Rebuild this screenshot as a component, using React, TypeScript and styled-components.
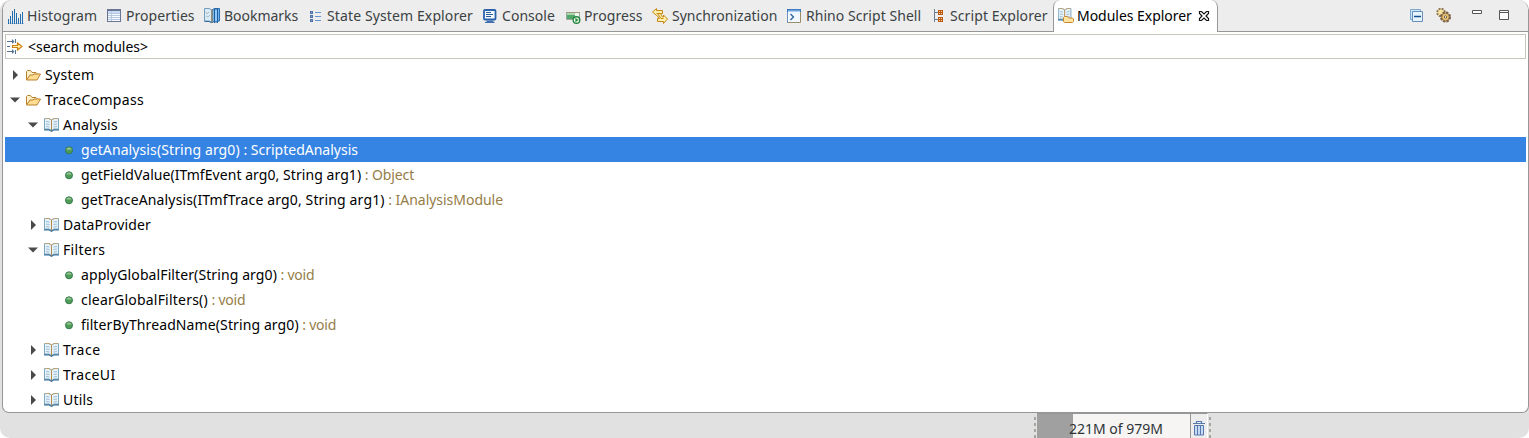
import React from "react";
import styled, { createGlobalStyle } from "styled-components";

const GlobalStyle = createGlobalStyle`
  * { box-sizing: border-box; }
  body { margin: 0; background: #fff; overflow: hidden; }
`;

const Window = styled.div`
  display: flex;
  flex-direction: column;
  width: 1529px;
  height: 438px;
  background: #e1e1e1;
  border-radius: 10px;
  overflow: hidden;
  font-family: "Noto Sans", sans-serif;
  font-size: 14px;
  color: #000;
`;

const Panel = styled.div`
  height: 413px;
  flex: none;
  margin-left: 2px;
  display: flex;
  flex-direction: column;
  background: #fff;
  border: 1px solid #979797;
  border-top: 0;
  border-radius: 10px 10px 7px 7px;
  overflow: hidden;
`;

const TabBar = styled.div`
  height: 32px;
  flex: none;
  display: flex;
  background: linear-gradient(#979797, #979797) 0 31px / 100% 1px no-repeat #ededed;
  padding-left: 5px;
`;

const Tab = styled.div<{ $width: number }>`
  display: flex;
  align-items: center;
  width: ${(p) => p.$width}px;
  flex: none;
  color: #3b4244;
`;

const ActiveTab = styled(Tab)`
  margin-left: -5px;
  padding-left: 4px;
  background: #fff;
  color: #000;
  border: 1px solid #979797;
  border-width: 0 1px;
  border-radius: 7px 7px 0 0;
`;

const TabLabel = styled.span<{ $indent: number; $spacing: number }>`
  margin-left: ${(p) => p.$indent}px;
  letter-spacing: ${(p) => p.$spacing}px;
  line-height: 20px;
  white-space: nowrap;
`;

const Icon = styled.svg`
  width: 16px;
  height: 16px;
  flex: none;
  display: block;
`;

const CloseIcon = styled(Icon)`
  width: 12px;
  height: 12px;
  margin-left: auto;
  margin-right: 7px;
`;

const Toolbar = styled.div`
  display: flex;
  align-items: center;
  margin-left: auto;
  padding-right: 13px;
`;

const ToolButton = styled.div<{ $gap: number }>`
  margin-right: ${(p) => p.$gap}px;
`;

const Search = styled.div`
  display: flex;
  align-items: center;
  height: 25px;
  flex: none;
  margin: 2px 2px 3px;
  padding-left: 1px;
  border: 1px solid #c9c5bd;
  & > svg { margin-bottom: 1px; }
`;

const Tree = styled.div`
  display: flex;
  flex-direction: column;
  margin: 0 2px;
`;

const Row = styled.div<{ $depth: number; $selected?: boolean }>`
  display: flex;
  align-items: center;
  height: 25px;
  padding-left: ${(p) => 2 + p.$depth * 18}px;
  background: ${(p) => (p.$selected ? "#3584e4" : "transparent")};
  color: ${(p) => (p.$selected ? "#fff" : "#000")};
  & > svg { margin-top: 1px; }
`;

const Arrow = styled(Icon)`
  margin-right: 2px;
`;

const RowLabel = styled.span<{ $spacing: number }>`
  margin-left: 4px;
  letter-spacing: ${(p) => p.$spacing}px;
  line-height: 20px;
  white-space: pre;
`;

const ReturnType = styled.span<{ $selected?: boolean; $spacing: number }>`
  letter-spacing: ${(p) => p.$spacing}px;
  color: ${(p) => (p.$selected ? "#fff" : "#957d47")};
`;

const StatusBar = styled.div`
  flex: 1;
  display: flex;
  padding-left: 1033px;
`;

const Handle = styled.div`
  width: 3px;
  margin-top: 3px;
  background: repeating-linear-gradient(#a5a69f 0 3px, transparent 3px 6px) 1px 1px / 2px 100% no-repeat;
`;

const Heap = styled.div`
  display: flex;
  align-items: center;
  justify-content: center;
  width: 154px;
  height: 30px;
  margin-left: 1px;
  border-top: 1px solid #979797;
  border-right: 1px solid #979797;
  background: linear-gradient(90deg, #a0a0a0 36px, #f6f5f4 36px);
  color: #2e3436;
  padding-left: 5px;
`;

const Trash = styled.div`
  display: flex;
  justify-content: center;
  width: 17px;
  padding-top: 6px;
  border-top: 1px solid #979797;
  border-right: 1px solid #fff;
  background: #ededed;
`;

const HistogramIcon = () => (
  <Icon viewBox="0 0 16 16" shapeRendering="crispEdges">
    <path d="M.5 11v5M2.500 8v8M4.500 3v13M6.500 1v15M8.500 5v11M10.500 10v6M12.500 6v10M14.500 4v12" stroke="#236fae" />
    <path d="M0 15.500h16" stroke="#236fae" opacity=".3" />
  </Icon>
);

const PropertiesIcon = () => (
  <Icon viewBox="0 0 16 16" shapeRendering="crispEdges">
    <path d="M1.500 1.500h13v12h-13z" fill="#f7fbff" stroke="#697592" />
    <path d="M1 1h14v2H1z" fill="#697592" />
    <path d="M2 3h12v2H2z" fill="#c9dcf4" />
    <path d="M2 5.500h12M2 7.500h12M2 9.500h12M2 11.500h12M5.500 3v10" stroke="#b6c7df" />
  </Icon>
);

const BookmarksIcon = () => (
  <Icon viewBox="0 0 16 16">
    <path d="M.5.500H5l3 1.700v12l-3-1.200H.5z" fill="#dceaf4" stroke="#6f9dbc" />
    <path d="m2 4 1 2 2-2M2 8l2 1 2-2" fill="none" stroke="#a5bfd0" />
    <path d="M.5 13.500H5l3 1.300" fill="none" stroke="#356e98" />
    <path d="M8 2 10.500.5h5v12.500H11L8 14.500z" fill="#72b5f1" stroke="#286cab" />
    <path d="M10.500 1h3v14L12 13.300 10.500 15z" fill="#8fcaff" stroke="#1f5d9c" />
    <path d="M8 2v12.500" stroke="#b6853d" />
  </Icon>
);

const StateIcon = () => (
  <Icon viewBox="0 0 16 16" shapeRendering="crispEdges">
    <path d="M1.500 3.500h2v2h-2zM1.500 7.500h2v2h-2zM1.500 11.500h2v2h-2z" fill="#80a4db" stroke="#4e6fa9" />
    <path d="M6 4.500h6M6 8.500h6M6 12.500h6" stroke="#6993ce" />
  </Icon>
);

const ConsoleIcon = () => (
  <Icon viewBox="0 0 16 16">
    <rect x="1" y="2" width="11.500" height="9.500" rx="1" fill="#f4faff" stroke="#2c61ac" strokeWidth="1.800" />
    <path d="M3 4.500h5M3 6.500h7M3 8.500h5" stroke="#2c5d9d" />
    <path d="M3.500 12.500h7V14h1v1H2v-1h1.500z" fill="#4270af" />
  </Icon>
);

const ProgressIcon = () => (
  <Icon viewBox="0 0 16 16">
    <path d="M.5 4.500h13v7H.5z" fill="#edf7e9" stroke="#9da8a0" />
    <path d="M1 5h8v6H1z" fill="#50a768" />
    <path d="M1 5h8v2H1z" fill="#a9d6af" />
    <path d="M0 4.500h14" stroke="#a09b80" />
    <circle cx="10.500" cy="12" r="3.300" fill="#fff" stroke="#278540" strokeWidth="1.400" />
    <path d="m9.300 9.800 3.500 2.200-3.500 2.200z" fill="#299342" />
  </Icon>
);

const SyncIcon = () => (
  <Icon viewBox="0 0 16 16">
    <path d="M4.500.5v2h6v3h-2l2 3.500h1V7l4 4-4 4.500v-2h-6v-3h2L5 7.500H4.500l-4-3.500z" fill="#fff1a9" stroke="#c68618" />
    <path d="M4.500 5.500h4M5.500 5.500 9 10.500h2.500" fill="none" stroke="#c68618" />
  </Icon>
);

const ShellIcon = () => (
  <Icon viewBox="0 0 16 16">
    <path d="M.5 1.500h13v13H.5z" fill="#f1f8ff" stroke="#9a8d69" />
    <path d="M0 1h14v3H0z" fill="#3e7ac1" />
    <path d="M1 2.500h12V4H1z" fill="#a7cdf1" />
    <path d="M.5 4v10.500" stroke="#6c91bc" />
    <path d="m3.500 6 3 3-3 3" fill="none" stroke="#285d93" strokeWidth="1.200" />
  </Icon>
);

const ScriptIcon = () => (
  <Icon viewBox="0 0 16 16" shapeRendering="crispEdges">
    <path d="M.5 1v13M0 4.500h4M0 11.500h4" stroke="#6c7f9b" />
    <path d="M4 2h5v5H4zM4 9h5v5H4z" fill="#b95914" />
    <path d="M5 3h1v1H5zM7 3h1v1H7zM5 5h1v1H5zM7 5h1v1H7zM5 10h1v1H5zM7 10h1v1H7zM5 12h1v1H5zM7 12h1v1H7z" fill="#ffd49a" />
  </Icon>
);

const bookPages = (
  <>
    <path d="M1.500 1.500H6L8.500 3 11 1.500h4.500V12H11l-2.500 1.500L6 12H1.500z" fill="#e6f2fa" stroke="#7fa6bf" />
    <path d="M1 12.800h5l2.500 1.500 2.500-1.500h5" fill="none" stroke="#356e98" strokeWidth="1.300" />
    <path d="M2 1.500h4L8.500 3 11 1.500h4" fill="none" stroke="#bea376" />
    <path d="M8.500 3v10.500" stroke="#b58b4d" />
    <path d="m3 4.500 3.500.5M3 7l3.500.5M3 9.500l3.500.5M10.500 5l3.500-.5M10.500 7.500l3.500-.5M10.500 10l3.500-.5" stroke="#9ebdd4" />
  </>
);

const BookIcon = () => <Icon viewBox="0 0 16 16">{bookPages}</Icon>;

const ModulesIcon = () => (
  <Icon viewBox="0 0 16 16">
    <g transform="translate(-1 -1) scale(.9 1)">{bookPages}</g>
    <path d="M5.500 13.500V9.500l1-1h3l1 1.500h4l1 1v2.500l-1 1h-8z" fill="#ffe3a2" stroke="#c48a30" />
  </Icon>
);

const FolderIcon = () => (
  <Icon viewBox="0 0 16 16">
    <path d="M1.500 12.500v-8l1-1h3l1.500 2h4l1 1v2" fill="#fff0cc" stroke="#b9812f" />
    <path d="m1.500 13 3.500-5h3l1-1h6.500L12 13z" fill="#ffdc91" stroke="#b9812f" strokeLinejoin="round" />
  </Icon>
);

const MethodIcon = () => (
  <Icon viewBox="0 0 16 16">
    <circle cx="8" cy="8.300" r="3.500" fill="#4f9c58" stroke="#347a4c" />
    <path d="M5.200 7.500a2.900 2.600 0 0 1 5.600 0z" fill="#9ac693" />
  </Icon>
);

const FilterIcon = () => (
  <Icon viewBox="0 0 16 16">
    <path d="M0 3.500h7M0 13.500h7M0 8.500h3" stroke="#557492" />
    <path d="m5 1 2.500 2.500L5 6M5 11l2.500 2.500L5 16" fill="#557492" />
    <path d="M8.500 1v4M8.500 12v4" stroke="#557492" />
    <path d="M5.500 7.500h5V5l4.500 3.500-4.500 3.500V9.500h-5z" fill="#fff0ac" stroke="#cd8214" strokeWidth="1.200" />
  </Icon>
);

const tabs = [
  { label: "Histogram", icon: <HistogramIcon />, width: 98, indent: 3, spacing: 0.1 },
  { label: "Properties", icon: <PropertiesIcon />, width: 98, indent: 4, spacing: 0.06 },
  { label: "Bookmarks", icon: <BookmarksIcon />, width: 105, indent: 4, spacing: -0.03 },
  { label: "State System Explorer", icon: <StateIcon />, width: 174, indent: 2, spacing: 0.12 },
  { label: "Console", icon: <ConsoleIcon />, width: 83, indent: 3, spacing: 0.03 },
  { label: "Progress", icon: <ProgressIcon />, width: 86, indent: 2, spacing: 0.1 },
  { label: "Synchronization", icon: <SyncIcon />, width: 135, indent: 4, spacing: 0 },
  { label: "Rhino Script Shell", icon: <ShellIcon />, width: 147, indent: 3, spacing: 0.05 },
  { label: "Script Explorer", icon: <ScriptIcon />, width: 124, indent: 0, spacing: 0.1 },
];

type Node = { depth: number; label: string; kind: "folder" | "book" | "method"; open?: boolean; type?: string; selected?: boolean; spacing: number; typeSpacing?: number };

const nodes: Node[] = [
  { depth: 0, label: "System", kind: "folder", spacing: 0.3 },
  { depth: 0, label: "TraceCompass", kind: "folder", open: true, spacing: 0.3 },
  { depth: 1, label: "Analysis", kind: "book", open: true, spacing: 0.2 },
  { depth: 2, label: "getAnalysis(String arg0)", type: "ScriptedAnalysis", kind: "method", selected: true, spacing: 0.1 },
  { depth: 2, label: "getFieldValue(ITmfEvent arg0, String arg1)", type: "Object", kind: "method", spacing: 0.06, typeSpacing: -0.1 },
  { depth: 2, label: "getTraceAnalysis(ITmfTrace arg0, String arg1)", type: "IAnalysisModule", kind: "method", spacing: 0.14, typeSpacing: -0.03 },
  { depth: 1, label: "DataProvider", kind: "book", spacing: 0.15 },
  { depth: 1, label: "Filters", kind: "book", open: true, spacing: 0.35 },
  { depth: 2, label: "applyGlobalFilter(String arg0)", type: "void", kind: "method", spacing: 0.1, typeSpacing: -0.2 },
  { depth: 2, label: "clearGlobalFilters()", type: "void", kind: "method", spacing: 0.22, typeSpacing: -0.2 },
  { depth: 2, label: "filterByThreadName(String arg0)", type: "void", kind: "method", spacing: 0.11, typeSpacing: -0.2 },
  { depth: 1, label: "Trace", kind: "book", spacing: 0.5 },
  { depth: 1, label: "TraceUI", kind: "book", spacing: 0.35 },
  { depth: 1, label: "Utils", kind: "book", spacing: 0.2 },
];

const icons = { folder: <FolderIcon />, book: <BookIcon />, method: <MethodIcon /> };

const TreeRow = ({ node }: { node: Node }) => (
  <Row $depth={node.depth} $selected={node.selected}>
    <Arrow viewBox="0 0 16 16">
      {node.kind !== "method" && <path d={node.open ? "M3 5.500h10L8 10.500z" : "M6 3v10l5-5z"} fill="#4a4a4a" />}
    </Arrow>
    {icons[node.kind]}
    <RowLabel $spacing={node.spacing}>
      {node.label}
      {node.type && <ReturnType $selected={node.selected} $spacing={node.typeSpacing ?? 0}> : {node.type}</ReturnType>}
    </RowLabel>
  </Row>
);

export default function App() {
  return (
    <Window>
      <GlobalStyle />
      <Panel>
        <TabBar>
          {tabs.map((t) => (
            <Tab key={t.label} $width={t.width}>
              {t.icon}
              <TabLabel $indent={t.indent} $spacing={t.spacing}>{t.label}</TabLabel>
            </Tab>
          ))}
          <ActiveTab $width={165}>
            <ModulesIcon />
            <TabLabel $indent={3} $spacing={-0.03}>Modules Explorer</TabLabel>
            <CloseIcon viewBox="0 0 12 12">
              <path d="M1.500 1.500h2L6 4l2.500-2.500h2v2L8 6l2.500 2.500v2h-2L6 8l-2.500 2.500h-2v-2L4 6 1.500 3.500z" fill="#fff" stroke="#111" strokeWidth="1.200" />
            </CloseIcon>
          </ActiveTab>
          <Toolbar>
            <ToolButton $gap={10}>
              <Icon viewBox="0 0 16 16">
                <path d="M.5 1.500h10v10H.5z" fill="#cce7fa" stroke="#7da8d1" />
                <path d="M2.500 3.500h10v10h-10z" fill="#e4f5ff" stroke="#698cb9" />
                <path d="M4 8.500h7" stroke="#174e8c" strokeWidth="1.500" />
              </Icon>
            </ToolButton>
            <ToolButton $gap={20}>
              <Icon viewBox="0 0 16 16">
                <circle cx="5" cy="4.500" r="3.800" fill="#f5e3a0" stroke="#8f7353" strokeWidth="1.800" strokeDasharray="2 1" />
                <circle cx="9.500" cy="9" r="4.500" fill="#e9c874" stroke="#765a42" strokeWidth="2" strokeDasharray="2.400 1.130" />
                <circle cx="9.500" cy="9" r="3.700" fill="#e9c874" stroke="#765a42" strokeWidth=".7" />
                <circle cx="9.500" cy="9" r="1.200" fill="#fff" stroke="#765a42" />
              </Icon>
            </ToolButton>
            <ToolButton $gap={11}>
              <Icon viewBox="0 0 16 16"><path d="M.5 2.500h9v3h-9z" fill="#fff" stroke="#555" /></Icon>
            </ToolButton>
            <ToolButton $gap={0}>
              <Icon viewBox="0 0 16 16"><path d="M.5 2.500h9v9h-9zM.5 4.500h9" fill="#fff" stroke="#555" /></Icon>
            </ToolButton>
          </Toolbar>
        </TabBar>
        <Search>
          <FilterIcon />
          <TabLabel $indent={5} $spacing={0}>&lt;search modules&gt;</TabLabel>
        </Search>
        <Tree>
          {nodes.map((n) => <TreeRow key={n.label} node={n} />)}
        </Tree>
      </Panel>
      <StatusBar>
        <Handle />
        <Heap>221M of 979M</Heap>
        <Trash>
          <Icon viewBox="0 0 16 16">
            <path d="M5.500 3V1.500h5V3M2 3.500h12" fill="none" stroke="#5779ad" strokeWidth="1.200" />
            <path d="M3.500 5.500h9v9.500h-9z" fill="#c5dbf5" stroke="#5779ad" />
            <path d="M6.500 5v10M9.500 5v10" stroke="#5779ad" />
          </Icon>
        </Trash>
        <Handle />
      </StatusBar>
    </Window>
  );
}
